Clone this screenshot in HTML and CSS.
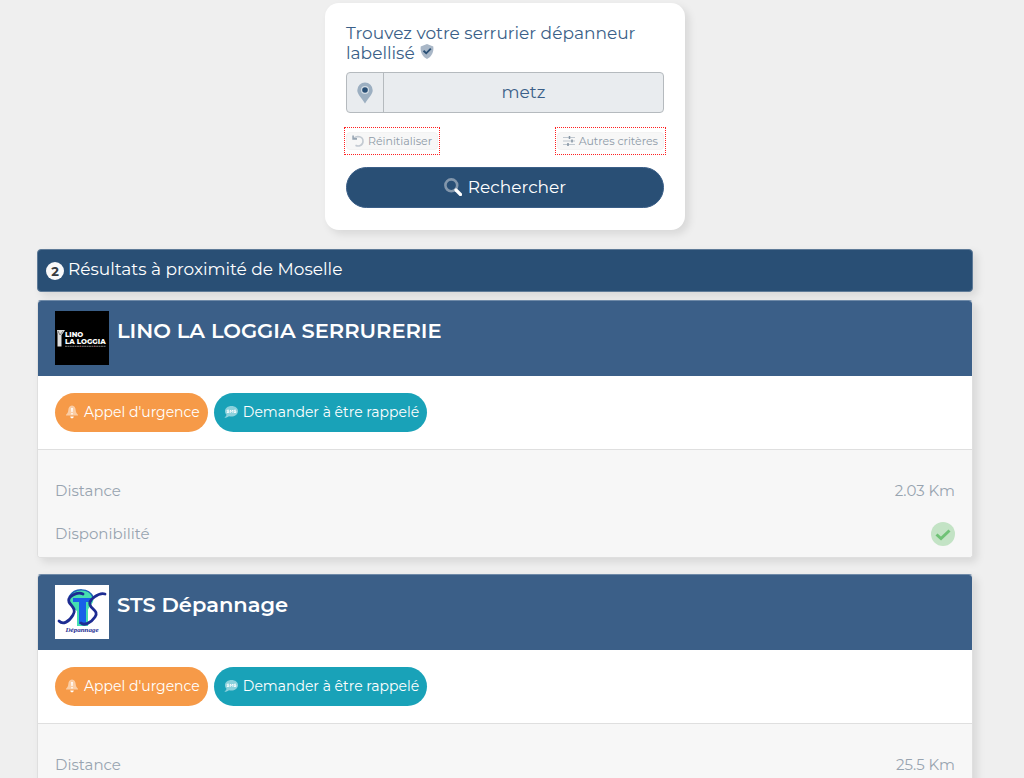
FILE: index.html
```html
<!DOCTYPE html>
<html lang="fr">
<head>
    <meta charset="UTF-8">
    <meta name="viewport" content="width=device-width, initial-scale=1.0">
    <title>Serruriers à proximité de Moselle</title>
    <link rel="stylesheet" href="styles.css">
</head>
<body>

<!-- Shared icons -->
<svg class="sprite" aria-hidden="true">
    <symbol id="icon-bell" viewBox="0 0 14 14">
        <path d="M7 0.500C4.500 0.900 3.400 2.700 3.300 5C3.200 7.500 2.400 8.500 1 9.800V10.600H13V9.800C11.600 8.500 10.800 7.500 10.700 5C10.600 2.700 9.500 0.900 7 0.500Z" fill="#fff" opacity=".5"/>
        <path d="M6.100 3H7.900L7.600 7H6.400ZM6.300 8H7.700V9.400H6.300ZM5.200 11.600H8.800A1.800 1.800 0 0 1 5.200 11.600Z" fill="#fff"/>
    </symbol>
    <symbol id="icon-sms" viewBox="0 0 14 14">
        <path d="M7.500 1C3.800 1 1 3.200 1 6.200C1 7.600 1.600 8.800 2.500 9.700C2.200 11 1.200 12 0.300 12.700C2.200 12.800 4 12 5 11.200C9.500 12.300 14 9.900 14 6.200C14 3.200 11.200 1 7.500 1Z" fill="#fff" opacity=".5"/>
        <path d="M5 5.200H3.200V6.300H4.800V7.500H2.800M6.300 7.900V5L7.600 6.500L8.900 5V7.900M12 5.200H10.300V6.300H11.900V7.500H10" fill="none" stroke="#fff" stroke-width=".9"/>
    </symbol>
    <symbol id="icon-check" viewBox="0 0 24 24">
        <circle cx="12" cy="12" r="12" fill="#c3e3c5"/>
        <path d="M5.500 12.500L10 16.500L18.500 8.500" fill="none" stroke="#6fc276" stroke-width="3"/>
    </symbol>
</svg>

<main class="page">

    <form class="search-card">
        <label class="search-title" for="city">Trouvez votre serrurier dépanneur labellisé
            <svg class="icon-shield" viewBox="0 0 14 15">
                <path d="M7 0L13.300 2.500C14 8 11.500 13 7 15C2.500 13 0 8 0.700 2.500Z" fill="#a9b7c7"/>
                <path d="M3.500 6.800L6.200 9.300L10.800 4.700" fill="none" stroke="#294f75" stroke-width="1.900"/>
            </svg>
        </label>
        <div class="input-group">
            <span class="input-icon">
                <svg width="16" height="22" viewBox="0 0 16 22">
                    <path d="M8 0.500A7.700 7.700 0 0 0 0.300 8.200C0.300 12 4 15 8 21.500C12 15 15.700 12 15.700 8.200A7.700 7.700 0 0 0 8 0.500Z" fill="#9cafc1"/>
                    <circle cx="8" cy="8" r="4" fill="#d5dee6"/>
                    <circle cx="8" cy="8" r="2.800" fill="#294f75"/>
                </svg>
            </span>
            <input type="text" id="city" value="metz">
        </div>
        <div class="search-options">
            <span class="option">
                <button type="reset">
                    <svg width="12" height="12" viewBox="0 0 12 12">
                        <path d="M2 3.200C5 0.300 11 1.500 11 6.200C11 10.500 6.500 12 3.500 10.200" fill="none" stroke="#c3cad2" stroke-width="1.600"/>
                        <path d="M0.300 0.500H1.900V3H5V4.700H0.300Z" fill="#97a5b3"/>
                    </svg>
                    Réinitialiser
                </button>
            </span>
            <span class="option">
                <button type="button">
                    <svg width="12" height="12" viewBox="0 0 12 12">
                        <path d="M0 2.500H12M0 6H12M0 9.500H12" stroke="#c0c8d0" stroke-width="1.200"/>
                        <path d="M6.500 1V4M9 4.500V7.500M5 8V11" stroke="#8494a4" stroke-width="1.500"/>
                    </svg>
                    Autres critères
                </button>
            </span>
        </div>
        <button type="submit" class="btn-search">
            <svg width="18" height="18" viewBox="0 0 18 18">
                <circle cx="7.300" cy="7.300" r="5.900" fill="none" stroke="#8397ac" stroke-width="2.600"/>
                <path d="M12 12L16.500 16.500" stroke="#fff" stroke-width="3.200" stroke-linecap="round"/>
            </svg>
            Rechercher
        </button>
    </form>

    <h1 class="results-bar"><span class="badge">2</span>Résultats à proximité de Moselle</h1>

    <article class="card">
        <header class="card-header">
            <svg class="logo" viewBox="0 0 54 54">
                <rect width="54" height="54" fill="#000"/>
                <path d="M2 19H10L8 22L6.500 24V35.500H2.500V23Z" fill="#ddd"/>
                <path d="M3 20L5 24L8 20" fill="none" stroke="#555" stroke-width=".7"/>
                <text x="10" y="26" class="logo-lino">LINO</text>
                <text x="10" y="33" class="logo-lino">LA LOGGIA</text>
                <path d="M10 35.300H51" stroke="#777" stroke-width="1" stroke-dasharray="2 .4"/>
                <path d="M25 35.300H26M39 35.300H40" stroke="#c33" stroke-width="1"/>
            </svg>
            <h2>LINO LA LOGGIA SERRURERIE</h2>
        </header>
        <div class="card-actions">
            <button type="button" class="btn btn-urgent"><svg><use href="#icon-bell"/></svg>Appel d'urgence</button>
            <button type="button" class="btn btn-callback"><svg><use href="#icon-sms"/></svg>Demander à être rappelé</button>
        </div>
        <dl class="card-infos">
            <div><dt>Distance</dt><dd>2.03 Km</dd></div>
            <div><dt>Disponibilité</dt><dd><svg class="icon-ok" role="img" aria-label="Disponible"><use href="#icon-check"/></svg></dd></div>
        </dl>
    </article>

    <article class="card">
        <header class="card-header">
            <svg class="logo" viewBox="0 0 54 54">
                <rect width="54" height="54" fill="#fff"/>
                <path d="M14 13C17 3 34 2 38 12C40 18 34 21 33 25V41H22V26C17 23 13 19 14 13Z" fill="#45dfb0"/>
                <path d="M14 12C20 2 34 3 38 12" fill="none" stroke="#1b62b8" stroke-width="1.500"/>
                <path d="M18 13H37V17H31V39H24V17H18Z" fill="#1760e8"/>
                <path d="M28 9C22 6 12 12 14 17C16 21 22 24 18 30C14 37 8 40 4 36" fill="none" stroke="#1d2c92" stroke-width="2.800" stroke-linecap="round"/>
                <path d="M50 9C44 7 33 15 35 20C37 25 44 26 40 32C36 38 29 41 26 38" fill="none" stroke="#1d2c92" stroke-width="2.800" stroke-linecap="round"/>
                <text x="27" y="47" class="logo-sts">Dépannage</text>
            </svg>
            <h2>STS Dépannage</h2>
        </header>
        <div class="card-actions">
            <button type="button" class="btn btn-urgent"><svg><use href="#icon-bell"/></svg>Appel d'urgence</button>
            <button type="button" class="btn btn-callback"><svg><use href="#icon-sms"/></svg>Demander à être rappelé</button>
        </div>
        <dl class="card-infos">
            <div><dt>Distance</dt><dd>25.5 Km</dd></div>
            <div><dt>Disponibilité</dt><dd><svg class="icon-ok" role="img" aria-label="Disponible"><use href="#icon-check"/></svg></dd></div>
        </dl>
    </article>

</main>

</body>
</html>
```
FILE: styles.css
```css
* {
    box-sizing: border-box;
}
body {
    margin: 0;
    background-color: #efefef;
    font-family: Montserrat, Inter, sans-serif;
    color: #294f75;
}
button, input {
    font-family: inherit;
}
button {
    cursor: pointer;
}
.sprite {
    display: none;
}
.page {
    padding: 3px 51px 17px 37px;
}

/* Search form */
.search-card {
    max-width: 360px;
    margin: 0 auto 19px;
    padding: 20px 21px 22px;
    background-color: white;
    border-radius: 14px;
    box-shadow: 4px 4px 8px rgba(0, 0, 0, .1);
}
.search-title {
    display: block;
    margin-bottom: 9px;
    font-size: 17px;
    line-height: 20px;
    color: #3b5f88;
}
.icon-shield {
    width: 14px;
    height: 15px;
    margin-left: 1px;
}
.input-group {
    display: flex;
    height: 41px;
    border: 1px solid #b5babe;
    border-radius: 4px;
    background-color: #e9ecef;
}
.input-icon {
    display: flex;
    align-items: center;
    justify-content: center;
    width: 37px;
    border-right: 1px solid #b5babe;
}
.input-group input {
    flex: 1;
    min-width: 0;
    padding: 0 2px 2px;
    border: none;
    background: none;
    font-size: 17px;
    text-align: center;
    color: #3b5f88;
}
.search-options {
    display: flex;
    justify-content: space-between;
    margin: 14px -2px 12px;
}
.option {
    height: 28px;
    padding: 4px 1px;
    border: 1px dotted #ff2020;
}
.option button {
    display: flex;
    align-items: center;
    gap: 4px;
    height: 18px;
    padding: 0 5px 1px;
    border: 1px solid #f3f3f3;
    border-radius: 4px;
    background-color: #f7f7f7;
    font-size: 11px;
    color: #8e9aa7;
}
.btn-search {
    display: flex;
    align-items: center;
    justify-content: center;
    gap: 6px;
    width: 100%;
    height: 41px;
    padding: 0 6px 2px;
    border: 1px solid #3b5f88;
    border-radius: 21px;
    background-color: #294f75;
    font-size: 17px;
    color: white;
}

/* Results */
.results-bar {
    display: flex;
    align-items: center;
    gap: 4px;
    height: 43px;
    margin: 0 0 8px;
    padding: 0 8px 3px;
    border: 1px solid #5f7b98;
    border-radius: 4px;
    background-color: #294f75;
    box-shadow: 4px 4px 8px rgba(0, 0, 0, .1);
    font-size: 17px;
    font-weight: 400;
    color: white;
}
.badge {
    width: 18px;
    height: 18px;
    margin-top: 3px;
    border-radius: 50%;
    background-color: #f8f9fa;
    font-size: 13px;
    font-weight: 700;
    line-height: 18px;
    text-align: center;
    color: #343a40;
}
.card {
    margin-bottom: 16px;
    border: 1px solid #dfdfdf;
    border-top-color: #6f8aa8;
    border-radius: 4px;
    background-color: white;
    box-shadow: 4px 4px 8px rgba(0, 0, 0, .1);
    overflow: hidden;
}
.card-header {
    display: flex;
    gap: 8px;
    height: 75px;
    padding: 10px 17px;
    background-color: #3b5f88;
}
.card-header h2 {
    margin: 6px 0 0;
    font-size: 21px;
    font-weight: 600;
    line-height: 28px;
    color: white;
}
.logo {
    flex: none;
    width: 54px;
    height: 54px;
}
.logo-lino {
    font-size: 7px;
    font-weight: 800;
    fill: white;
}
.logo-sts {
    font-family: "Liberation Serif", serif;
    font-size: 7px;
    font-style: italic;
    font-weight: 700;
    text-anchor: middle;
    fill: #1d2c92;
}
.card-actions {
    display: flex;
    gap: 6px;
    padding: 17px;
}
.btn {
    display: flex;
    align-items: center;
    gap: 5px;
    height: 39px;
    padding: 0 8px 2px 10px;
    border: none;
    border-radius: 20px;
    font-size: 14px;
    color: white;
}
.btn svg {
    width: 14px;
    height: 14px;
}
.btn-urgent {
    background-color: #f69a48;
}
.btn-callback {
    background-color: #19a2b8;
}
.card-infos {
    margin: 0;
    padding: 29px 17px 11px;
    border-top: 1px solid #dfdfdf;
    background-color: #f7f7f7;
    font-size: 15px;
    line-height: 24px;
    color: #98a4b0;
}
.card-infos div {
    display: flex;
    justify-content: space-between;
}
.card-infos div + div {
    margin-top: 19px;
}
.card-infos dd {
    margin: 0;
}
.icon-ok {
    display: block;
    width: 24px;
    height: 24px;
}
```
